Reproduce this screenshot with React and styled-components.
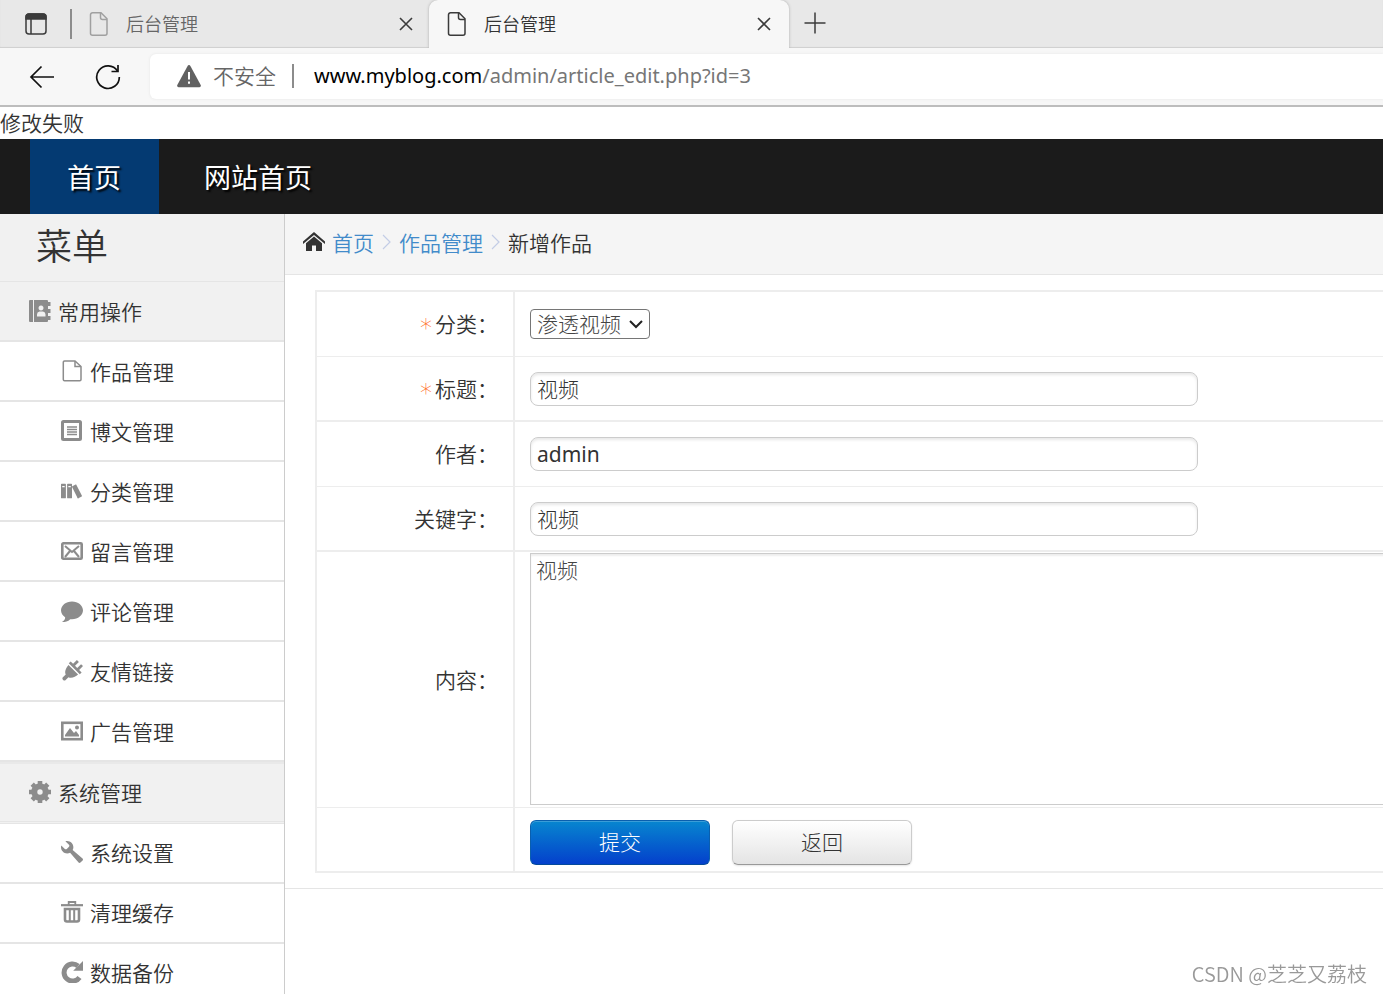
import React from 'react'
import styled, { createGlobalStyle, css } from 'styled-components'
import { ImBooks, ImBubble, ImPowerCord, ImWrench } from 'react-icons/im'

const GlobalStyle = createGlobalStyle`
  * {
    box-sizing: border-box;
  }

  body {
    margin: 0;
    background: #fff;
    color: #333;
    font-family: 'Noto Sans CJK SC', sans-serif;
    font-size: 21px;
    font-weight: 350;
    line-height: 30px;
  }

  a {
    color: inherit;
    text-decoration: none;
  }
`

/* icons */

const AddressIcon = () => (
  <svg width='22' height='22' viewBox='0 0 22 22' fill='#8c8c8c'>
    <path d='M1 0h3v22H1a1 1 0 0 1-1-1V1a1 1 0 0 1 1-1z' />
    <path
      fillRule='evenodd'
      d='M5 0H18a1 1 0 0 1 1 1v1h2.500v4H19v3h2.500v4H19v3h2.500v4H19v1a1 1 0 0 1-1 1H5zM12 5.500a2.500 2.500 0 1 0 .01 0zM8 16.500h8.500v-2a3 3 0 0 0-2.500-3h-3.500a3 3 0 0 0-2.500 3z'
    />
  </svg>
)

const FileIcon = () => (
  <svg width='22' height='22' viewBox='0 0 22 22' fill='none'>
    <path
      d='M3.500 1H14l6 5.500V19.500a1.200 1.200 0 0 1-1.200 1.200H3.500a1.200 1.200 0 0 1-1.200-1.200V2.200A1.200 1.200 0 0 1 3.500 1z'
      stroke='#8c8c8c'
      strokeWidth='1.500'
    />
    <path d='M14 1v5.500h6' stroke='#8c8c8c' strokeWidth='1.500' />
  </svg>
)

const NoteIcon = () => (
  <svg width='22' height='22' viewBox='0 0 22 22' fill='none' stroke='#8c8c8c'>
    <rect x='1.500' y='1.500' width='18' height='18' rx='1' strokeWidth='3' />
    <path d='M6 7h10M6 9.500h10M6 12h10M6 14.500h10' strokeWidth='1.300' />
  </svg>
)

const MailIcon = () => (
  <svg width='22' height='22' viewBox='0 0 22 22' fill='none' stroke='#8c8c8c'>
    <rect x='1.300' y='3.300' width='19.400' height='15.400' rx='1' strokeWidth='2.600' />
    <path d='M4 6l7 6 7-6M4 17l5-6M18 17l-5-6' strokeWidth='2' />
  </svg>
)

const PictureIcon = () => (
  <svg width='22' height='22' viewBox='0 0 22 22'>
    <rect x='1.300' y='2.800' width='19.400' height='16.400' fill='none' stroke='#8c8c8c' strokeWidth='2.600' />
    <path d='M4 16.500V15l5-7 4 5 2-2 3 4v1.500z' fill='#8c8c8c' />
    <circle cx='16' cy='7.500' r='2' fill='#8c8c8c' />
  </svg>
)

const GearIcon = () => (
  <svg width='22' height='22' viewBox='0 0 22 22'>
    <circle cx='11' cy='11' r='5.700' fill='none' stroke='#8c8c8c' strokeWidth='6' />
    <g fill='#8c8c8c'>
      {[0, 45, 90, 135].map((angle) => (
        <path
          key={angle}
          transform={`rotate(${angle} 11 11)`}
          d='M8.700 0h4.600v4H8.700zM8.700 18h4.600v4H8.700z'
        />
      ))}
    </g>
  </svg>
)

const TrashIcon = () => (
  <svg width='22' height='22' viewBox='0 0 22 22' fill='none' stroke='#8c8c8c'>
    <path d='M0 4.200h22' strokeWidth='2.200' />
    <path d='M7.700 4V1h6.600v3' strokeWidth='1.800' />
    <path d='M4 8v10.500a2 2 0 0 0 2 2h10a2 2 0 0 0 2-2V8z' strokeWidth='2.600' />
    <path d='M8.800 8v12M13.200 8v12' strokeWidth='2' />
  </svg>
)

const BackupIcon = () => (
  <svg width='22' height='22' viewBox='0 0 22 22'>
    <path
      d='M18.500 16.500A8.500 8.500 0 1 1 17 5'
      fill='none'
      stroke='#8c8c8c'
      strokeWidth='5'
    />
    <path d='M22 0v9.800h-9.800z' fill='#8c8c8c' />
  </svg>
)

const HomeIcon = () => (
  <svg width='22' height='20' viewBox='0 0 22 20' fill='#333'>
    <path d='M11 0L0 9.500v2.600L11 3l11 9.100V9.500z' />
    <path d='M11 4.600L3 11.200V19h6v-5.500h4V19h6v-7.800z' />
  </svg>
)

const PageIcon = ({ color }) => (
  <svg width='20' height='26' viewBox='0 0 20 26' fill='none' stroke={color} strokeWidth='1.500'>
    <path d='M3.500 1.800h8.500l6 6v14.500a2 2 0 0 1-2 2H3.500a2 2 0 0 1-2-2V3.800a2 2 0 0 1 2-2z' />
    <path d='M11.500 2v4.500a2 2 0 0 0 2 2H18' />
  </svg>
)

const PanelIcon = () => (
  <svg width='22' height='22' viewBox='0 0 22 22' fill='none' stroke='#3b3b3b' strokeWidth='1.500'>
    <rect x='1' y='1' width='20' height='20' rx='3' />
    <path d='M1 4a3 3 0 0 1 3-3h14a3 3 0 0 1 3 3v2H1z' fill='#3b3b3b' />
    <path d='M6 6v15' />
  </svg>
)

const CloseIcon = () => (
  <svg width='14' height='14' viewBox='0 0 14 14' stroke='#3b3b3b' strokeWidth='1.600'>
    <path d='M1 1l12 12M13 1L1 13' />
  </svg>
)

const PlusIcon = () => (
  <svg width='22' height='22' viewBox='0 0 22 22' stroke='#3b3b3b' strokeWidth='1.500'>
    <path d='M11 0.500v21M0.500 11h21' />
  </svg>
)

const BackIcon = () => (
  <svg width='26' height='24' viewBox='0 0 26 24' fill='none' stroke='#111' strokeWidth='1.700'>
    <path d='M12.500 1.500L2 12l10.500 10.500M2 12h23' />
  </svg>
)

const ReloadIcon = () => (
  <svg width='26' height='26' viewBox='0 0 26 26' fill='none' stroke='#111' strokeWidth='1.700'>
    <path d='M22.500 7A11.300 11.300 0 1 0 24.300 13' />
    <path d='M23 1v6.500h-6.500' />
  </svg>
)

const WarningIcon = () => (
  <svg width='24' height='24' viewBox='0 0 24 24'>
    <path d='M10.600 1.900a1.600 1.600 0 0 1 2.800 0l10.300 19a1.600 1.600 0 0 1-1.400 2.300H1.700a1.600 1.600 0 0 1-1.400-2.300z' fill='#616161' />
    <path d='M12 8v7.500M12 17.500v2.300' stroke='#fff' strokeWidth='2' />
  </svg>
)

const Crumb = () => (
  <svg width='9' height='16' viewBox='0 0 9 16' fill='none' stroke='#c3cde6' strokeWidth='1.200'>
    <path d='M1 1l7 7-7 7' />
  </svg>
)

/* browser chrome */

const Browser = styled.header`
  border-bottom: 2px solid #bdbdbd;
`

const TabStrip = styled.div`
  display: flex;
  height: 48px;
  background: #e8e8e8;
  box-shadow: inset 0 -1px 1px #cfcfcf;
`

const IconButton = styled.button`
  display: flex;
  align-items: center;
  justify-content: center;
  padding: 0;
  border: 0;
  background: none;
`

const PanelButton = styled(IconButton)`
  width: 70px;
  height: 48px;
  border-left: 2px solid transparent;
`

const Separator = styled.span`
  flex: none;
  width: 2px;
  height: ${({ $height }) => $height}px;
  align-self: center;
  background: #8c8c8c;
`

const Tab = styled.div`
  display: flex;
  align-items: center;
  width: ${({ $active }) => ($active ? 360 : 357)}px;
  height: 48px;
  padding: 0 16px 0 17px;
  color: #666;
  font-size: 18px;
  line-height: 26px;

  span {
    flex: 1;
    height: 28px;
    margin-left: 17px;
  }

  ${({ $active }) =>
    $active &&
    css`
      padding: 0 18px;
      border-radius: 9px 9px 0 0;
      background: #f7f7f7;
      box-shadow: 0 0 3px #aaa;
      clip-path: inset(0 -4px);
      color: #333;
    `}
`

const NewTab = styled(IconButton)`
  width: 52px;
  height: 46px;
`

const Toolbar = styled.div`
  display: flex;
  align-items: center;
  height: 57px;
  padding-left: 29px;
  background: #f7f7f7;
`

const ToolButton = styled(IconButton)`
  width: 26px;
  height: 32px;
  margin-right: 40px;
`

const Address = styled.div`
  display: flex;
  flex: 1;
  align-items: center;
  height: 45px;
  padding: 0 0 1px 27px;
  margin-left: -11px;
  border-radius: 6px 0 0 6px;
  background: #fff;
  box-shadow: 0 0 3px #e4e4e4;
  color: #666;

  span + span {
    margin: 0 20px 0 16px;
  }
`

const Url = styled.div`
  color: #767676;
  font-family: 'Noto Sans', sans-serif;
  font-size: 20px;
  font-weight: 400;

  b {
    color: #000;
    font-weight: 400;
  }
`

const Insecure = styled.span`
  height: 30px;
  margin-left: 12px;
  line-height: 28px;
`

/* admin page */

const Message = styled.p`
  height: 32px;
  margin: 0;
`

const NavBar = styled.nav`
  display: flex;
  gap: 8px;
  height: 75px;
  padding-left: 30px;
  background: #1b1b1b;
`

const NavLink = styled.a`
  padding: 0 38px 0 37px;
  background: ${({ $active }) => ($active ? '#043a72' : 'transparent')};
  color: #fff;
  font-size: 27px;
  font-weight: 400;
  line-height: 75px;
  text-shadow: 2px 2px 2px #000;
`

const Layout = styled.div`
  display: flex;
  flex: 1;
  min-height: 0;
`

const Sidebar = styled.aside`
  flex: none;
  width: 285px;
  border-right: 1px solid #ccc;
  overflow: hidden;
`

const MenuTitle = styled.h1`
  height: 68px;
  margin: 0;
  padding-left: 36px;
  border-bottom: 1px solid #e5e5e5;
  background: #f1f1f1;
  font-size: 36px;
  font-weight: 350;
  line-height: 60px;
`

const MenuItem = styled.a`
  display: flex;
  align-items: center;
  gap: 7px;
  height: 60px;
  padding-left: 61px;
  border-bottom: 2px solid #e5e5e5;

  svg {
    flex: none;
    color: #8c8c8c;
  }
`

const MenuGroup = styled(MenuItem)`
  padding-left: 29px;
  background: #f1f1f1;

  ${MenuItem} + & {
    height: 62px;
    padding-bottom: 2px;
    border-top: 2px solid #e9e9e9;
    border-bottom: 3px double #e5e5e5;
  }

  ${MenuItem} + & ~ a {
    padding-bottom: 2px;
  }
`

const Main = styled.main`
  flex: 1;
  min-width: 0;
  overflow: hidden;
`

const Breadcrumb = styled.div`
  display: flex;
  align-items: center;
  gap: 8px;
  height: 61px;
  padding: 0 0 4px 18px;
  border-bottom: 1px solid #e5e5e5;
  background: #f5f5f5;

  a {
    color: #428bca;
  }

  > a:first-child {
    display: flex;
    align-items: center;
    gap: 7px;
  }
`

const FormArea = styled.form`
  padding: 15px 0 15px 30px;
  border-bottom: 1px solid #e5e5e5;
`

const FormTable = styled.table`
  width: 100%;
  min-width: 1160px;
  border: solid #ededed;
  border-width: 2px 0 0 2px;
  border-spacing: 0;

  th,
  td {
    padding: 0 15px;
    border-bottom: 1px solid #ededed;
    font-weight: 350;
  }

  tr:nth-child(even) > * {
    border-bottom-width: 2px;
  }

  th {
    width: 198px;
    padding-bottom: 2px;
    border-right: 2px solid #ededed;
    text-align: right;
  }
`

const Row = styled.tr`
  height: ${({ $tall }) => ($tall ? 256 : 65)}px;
`

const Star = styled.i`
  margin-right: 3px;
  color: #ff6a1a;
  font-family: 'DejaVu Sans', sans-serif;
  font-size: 24px;
  font-style: normal;
  font-weight: 300;
  line-height: 0;
  vertical-align: -4px;
`

const SelectBox = styled.div`
  position: relative;
  width: 120px;
  height: 30px;

  svg {
    position: absolute;
    top: 10px;
    right: 7px;
    pointer-events: none;
  }
`

const Select = styled.select`
  appearance: none;
  display: block;
  width: 100%;
  height: 30px;
  padding: 0 6px 2px;
  border: 1px solid #767676;
  border-radius: 4px;
  background: #fff;
  color: #444;
  font: inherit;
  font-weight: 300;
  line-height: 26px;
`

const Input = styled.input`
  display: block;
  width: 668px;
  height: 34px;
  padding: 0 6px 1px;
  border: 1px solid #ccc;
  border-radius: 8px;
  box-shadow: inset 0 2px 3px #e8e8e8;
  color: #333;
  font-family: 'Noto Sans', 'Noto Sans CJK SC', sans-serif;
  font-size: 21px;
  font-weight: ${({ $latin }) => ($latin ? 400 : 300)};
`

const TextArea = styled.textarea`
  display: block;
  width: 920px;
  height: 252px;
  margin-bottom: 2px;
  padding: 0 5px;
  border: 1px solid #ccc;
  box-shadow: inset 0 2px 2px #eee;
  color: #444;
  font: inherit;
  font-weight: 300;
  resize: none;
`

const Buttons = styled.div`
  display: flex;
  gap: 22px;
  padding-top: 6px;
`

const Button = styled.button`
  width: 180px;
  height: 45px;
  padding: 0 0 3px;
  border: 1px solid #ccc;
  border-bottom-color: #999;
  border-radius: 6px;
  background: linear-gradient(#fff, #e4e4e4);
  box-shadow: 0 1px 2px #e4e4e4;
  color: #333;
  font: inherit;
  font-weight: 300;

  ${({ $primary }) =>
    $primary &&
    css`
      border-color: #0a5fae #0a5fae #044a9c;
      background: linear-gradient(#0786cf, #0440cc);
      box-shadow: inset 0 1px 0 #3a9dd8;
      color: #fff;
    `}
`

const Watermark = styled.div`
  position: fixed;
  right: 16px;
  bottom: 5px;
  color: #999;
  font-size: 20px;
`

const Page = styled.div`
  display: flex;
  flex-direction: column;
  height: 100vh;
  overflow: hidden;
`

const commonItems = [
  { text: '作品管理', icon: FileIcon },
  { text: '博文管理', icon: NoteIcon },
  { text: '分类管理', icon: ImBooks },
  { text: '留言管理', icon: MailIcon },
  { text: '评论管理', icon: ImBubble },
  { text: '友情链接', icon: ImPowerCord },
  { text: '广告管理', icon: PictureIcon },
]

const systemItems = [
  { text: '系统设置', icon: ImWrench },
  { text: '清理缓存', icon: TrashIcon },
  { text: '数据备份', icon: BackupIcon },
]

const MenuList = ({ items }) =>
  items.map(({ text, icon: Icon }) => (
    <MenuItem href='#' key={text}>
      <Icon size={22} />
      {text}
    </MenuItem>
  ))

// full width colon after every label
const Field = ({ id, label, required, tall, children }) => (
  <Row $tall={tall}>
    <th>
      {required && <Star>*</Star>}
      <label htmlFor={id}>{`${label}\uff1a`}</label>
    </th>
    <td>{children}</td>
  </Row>
)

const App = () => {
  return (
    <Page>
      <GlobalStyle />
      <Browser>
        <TabStrip>
          <PanelButton aria-label='tabs'>
            <PanelIcon />
          </PanelButton>
          <Separator $height={30} />
          <Tab>
            <PageIcon color='#a0a0a0' />
            <span>后台管理</span>
            <IconButton aria-label='close'>
              <CloseIcon />
            </IconButton>
          </Tab>
          <Tab $active>
            <PageIcon color='#3b3b3b' />
            <span>后台管理</span>
            <IconButton aria-label='close'>
              <CloseIcon />
            </IconButton>
          </Tab>
          <NewTab aria-label='new tab'>
            <PlusIcon />
          </NewTab>
        </TabStrip>
        <Toolbar>
          <ToolButton aria-label='back'>
            <BackIcon />
          </ToolButton>
          <ToolButton aria-label='reload'>
            <ReloadIcon />
          </ToolButton>
          <Address>
            <WarningIcon />
            <Insecure>不安全</Insecure>
            <Separator $height={24} />
            <Url>
              <b>www.myblog.com</b>/admin/article_edit.php?id=3
            </Url>
          </Address>
        </Toolbar>
      </Browser>

      <Message>修改失败</Message>
      <NavBar>
        <NavLink href='#' $active>
          首页
        </NavLink>
        <NavLink href='#'>网站首页</NavLink>
      </NavBar>

      <Layout>
        <Sidebar>
          <MenuTitle>菜单</MenuTitle>
          <MenuGroup href='#'>
            <AddressIcon />
            常用操作
          </MenuGroup>
          <MenuList items={commonItems} />
          <MenuGroup href='#'>
            <GearIcon />
            系统管理
          </MenuGroup>
          <MenuList items={systemItems} />
        </Sidebar>

        <Main>
          <Breadcrumb>
            <a href='#'>
              <HomeIcon />
              首页
            </a>
            <Crumb />
            <a href='#'>作品管理</a>
            <Crumb />
            <span>新增作品</span>
          </Breadcrumb>
          <FormArea>
            <FormTable>
              <tbody>
                <Field id='category' label='分类' required>
                  <SelectBox>
                    <Select id='category'>
                      <option>渗透视频</option>
                    </Select>
                    <svg width='14' height='10' viewBox='0 0 14 10' fill='none' stroke='#222' strokeWidth='2'>
                      <path d='M1 2l6 6 6-6' />
                    </svg>
                  </SelectBox>
                </Field>
                <Field id='title' label='标题' required>
                  <Input id='title' defaultValue='视频' />
                </Field>
                <Field id='author' label='作者'>
                  <Input id='author' defaultValue='admin' $latin />
                </Field>
                <Field id='keywords' label='关键字'>
                  <Input id='keywords' defaultValue='视频' />
                </Field>
                <Field id='content' label='内容' tall>
                  <TextArea id='content' defaultValue='视频' />
                </Field>
                <Row>
                  <th />
                  <td>
                    <Buttons>
                      <Button type='button' $primary>
                        提交
                      </Button>
                      <Button type='button'>返回</Button>
                    </Buttons>
                  </td>
                </Row>
              </tbody>
            </FormTable>
          </FormArea>
        </Main>
      </Layout>
      <Watermark>CSDN @芝芝又荔枝</Watermark>
    </Page>
  )
}

export default App
